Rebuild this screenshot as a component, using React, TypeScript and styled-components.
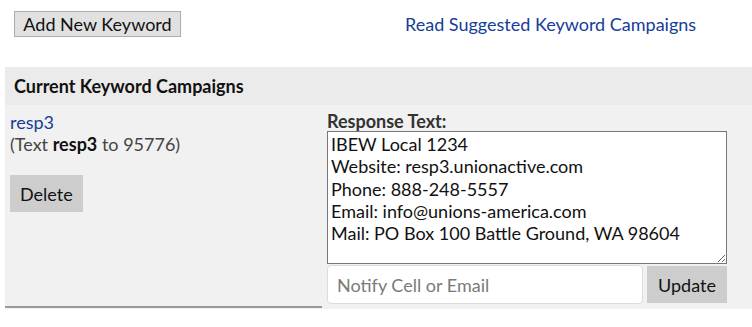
import React, { useState } from 'react';
import styled, { createGlobalStyle } from 'styled-components';

const GlobalStyle = createGlobalStyle`
	body {
		margin: 0;
		background: #fff;
		font-family: Lato, "Open Sans", sans-serif;
		color: #111;
	}
`;

const campaign = {
	keyword: 'resp3',
	shortCode: '95776',
	response: `IBEW Local 1234
Website: resp3.unionactive.com
Phone: 888-248-5557
Email: info@unions-america.com
Mail: PO Box 100 Battle Ground, WA 98604`,
};

function App() {
	const [response, setResponse] = useState(campaign.response);
	const [notify, setNotify] = useState('');
	return (
		<Page>
			<GlobalStyle />
			<Toolbar>
				<AddButton type="button">Add New Keyword</AddButton>
				<TopLink href="#">Read Suggested Keyword Campaigns</TopLink>
			</Toolbar>
			<Panel>
				<PanelHeader>Current Keyword Campaigns</PanelHeader>
				<Row>
					<KeywordCell>
						<KeywordLink href="#">{campaign.keyword}</KeywordLink>
						<Hint>
							(Text <b>{campaign.keyword}</b> to {campaign.shortCode})
						</Hint>
						<GreyButton type="button" $pad="0 10px">
							Delete
						</GreyButton>
					</KeywordCell>
					<ResponseCell>
						<Label>Response Text:</Label>
						<ResponseArea
							value={response}
							onChange={(e) => setResponse(e.target.value)}
						/>
						<NotifyRow>
							<NotifyInput
								placeholder="Notify Cell or Email"
								value={notify}
								onChange={(e) => setNotify(e.target.value)}
							/>
							<GreyButton type="button" $pad="0 11px">
								Update
							</GreyButton>
						</NotifyRow>
					</ResponseCell>
				</Row>
			</Panel>
		</Page>
	);
}

const Page = styled.div`
	padding-left: 5px;
	width: 747px;
`;

const Toolbar = styled.div`
	display: flex;
	align-items: flex-start;
	height: 67px;
	box-sizing: border-box;
	padding: 11px 0 0 9px;
`;

const AddButton = styled.button`
	font-family: Lato, sans-serif;
	font-size: 18px;
	color: #111;
	background: #e1e1e1;
	border: 1px solid #adadad;
	height: 26px;
	width: 167px;
	padding: 0;
	line-height: 22px;
	cursor: pointer;
`;

const TopLink = styled.a`
	margin-left: 224px;
	margin-top: 1px;
	font-size: 18px;
	line-height: 24px;
	color: #153d99;
	text-decoration: none;
`;

const Panel = styled.div`
	display: flex;
	flex-direction: column;
`;

const PanelHeader = styled.div`
	background: #ebebeb;
	height: 38px;
	display: flex;
	align-items: center;
	padding-left: 9px;
	font-weight: 700;
	font-size: 18px;
	color: #111;
`;

const Row = styled.div`
	display: flex;
	background: #f1f1f1;
	align-items: flex-start;
`;

const KeywordCell = styled.div`
	width: 317px;
	height: 203px;
	border-bottom: 2px solid #9a9a9a;
	padding: 6px 0 0 5px;
	box-sizing: border-box;
	display: flex;
	flex-direction: column;
	align-items: flex-start;
`;

const KeywordLink = styled.a`
	font-size: 18px;
	line-height: 22px;
	color: #153d99;
	text-decoration: none;
`;

const Hint = styled.div`
	font-size: 18px;
	line-height: 22px;
	color: #444;
	margin-bottom: 20px;
	b {
		color: #111;
	}
`;

const GreyButton = styled.button<{ $pad: string }>`
	font-family: Lato, sans-serif;
	font-size: 18px;
	color: #111;
	background: #cdcdcd;
	border: none;
	height: 37px;
	padding: ${(p) => p.$pad};
	cursor: pointer;
	flex-shrink: 0;
`;

const ResponseCell = styled.div`
	flex: 1;
	padding: 7px 0 5px 5px;
	display: flex;
	flex-direction: column;
	width: 400px;
`;

const Label = styled.div`
	font-weight: 700;
	font-size: 18px;
	line-height: 19px;
	color: #333;
`;

const ResponseArea = styled.textarea`
	width: 400px;
	height: 133px;
	box-sizing: border-box;
	border: 1px solid #767676;
	font-family: Lato, sans-serif;
	font-size: 18px;
	line-height: 22.3px;
	color: #111;
	padding: 1px 3px;
	margin: 0;
	resize: vertical;
	display: block;
`;

const NotifyRow = styled.div`
	display: flex;
	gap: 4px;
	width: 400px;
	margin-top: 1px;
	align-items: center;
`;

const NotifyInput = styled.input`
	width: 316px;
	height: 39px;
	box-sizing: border-box;
	border: 1px solid #dcdcdc;
	border-radius: 4px;
	padding: 0 9px;
	font-family: Lato, sans-serif;
	font-size: 18px;
	color: #111;
	background: #fff;
	&::placeholder {
		color: #7a7a7a;
	}
`;

export default App;
